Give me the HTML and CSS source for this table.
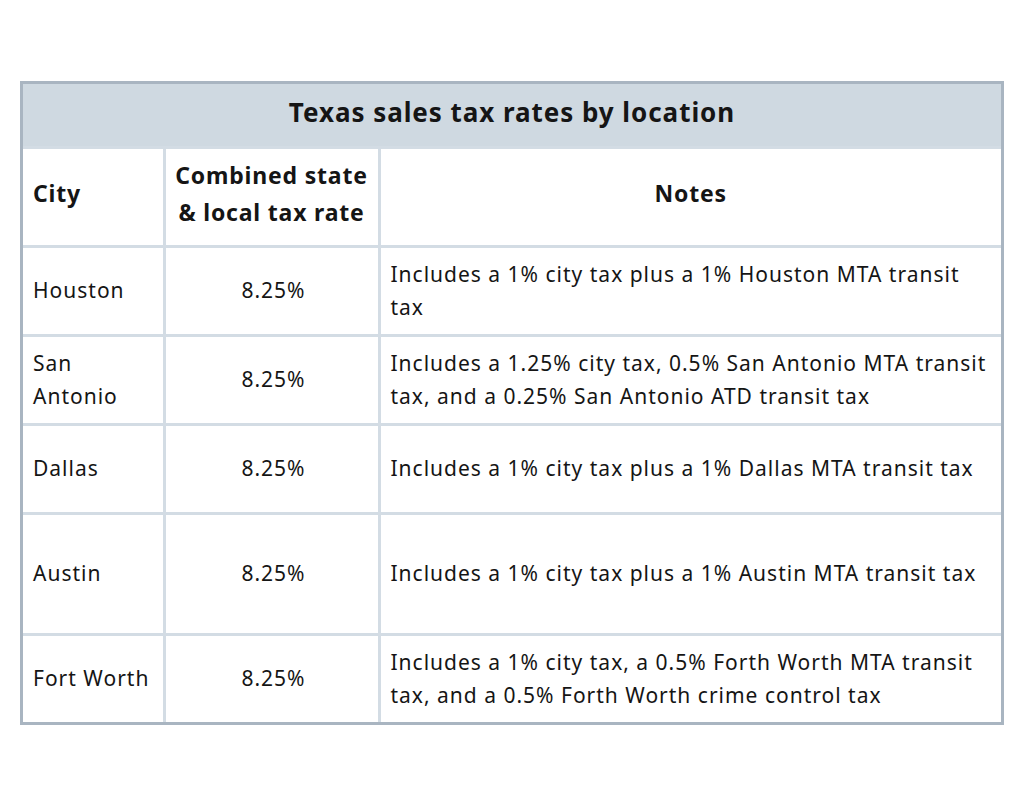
FILE: index.html
```html
<!DOCTYPE html>
<html lang="en">
<head>
<meta charset="utf-8">
<title>Texas sales tax rates by location</title>
<link rel="stylesheet" href="styles.css">
</head>
<body>
<div class="frame">
  <table class="rates">
    <colgroup>
      <col class="c-city">
      <col class="c-rate">
      <col class="c-notes">
    </colgroup>
    <thead>
      <tr class="r-title"><th colspan="3" class="title">Texas sales tax rates by location</th></tr>
      <tr class="r-head">
        <th class="left">City</th>
        <th>Combined state<br>&amp; local tax rate</th>
        <th>Notes</th>
      </tr>
    </thead>
    <tbody>
      <tr class="r-89">
        <td>Houston</td>
        <td class="center">8.25%</td>
        <td>Includes a 1% city tax plus a 1% Houston MTA transit tax</td>
      </tr>
      <tr class="r-89">
        <td>San<br>Antonio</td>
        <td class="center">8.25%</td>
        <td>Includes a 1.25% city tax, 0.5% San Antonio MTA transit tax, and a 0.25% San Antonio ATD transit tax</td>
      </tr>
      <tr class="r-89">
        <td>Dallas</td>
        <td class="center">8.25%</td>
        <td>Includes a 1% city tax plus a 1% Dallas MTA transit tax</td>
      </tr>
      <tr class="r-122">
        <td>Austin</td>
        <td class="center">8.25%</td>
        <td>Includes a 1% city tax plus a 1% Austin MTA transit tax</td>
      </tr>
      <tr class="r-88">
        <td>Fort Worth</td>
        <td class="center">8.25%</td>
        <td>Includes a 1% city tax, a 0.5% Forth Worth MTA transit tax, and a 0.5% Forth Worth crime control tax</td>
      </tr>
    </tbody>
  </table>
</div>
</body>
</html>
```
FILE: styles.css
```css
html, body {
  margin: 0;
  padding: 0;
  background: #ffffff;
}
body {
  padding: 81px 0 0 20px;
  font-family: "Noto Sans", "Open Sans", sans-serif;
  color: #151515;
}
.frame {
  width: 978px;
  border: 3px solid #a9b5c1;
}
.rates {
  width: 100%;
  table-layout: fixed;
  border-collapse: collapse;
  border-style: hidden;
  font-size: 21px;
  letter-spacing: 1px;
  line-height: 33px;
}
.c-city { width: 141px; }
.c-rate { width: 215px; }
.rates th, .rates td {
  border: 3px solid #d3dce4;
  padding: 0 10px 0 10px;
  vertical-align: middle;
  text-align: left;
  font-weight: 400;
}
.rates th {
  font-weight: 700;
  font-size: 23px;
  letter-spacing: 0.8px;
  text-align: center;
  line-height: 37px;
  padding: 0 6px 6px 6px;
  white-space: nowrap;
}
.rates th.left { text-align: left; padding-left: 10px; }
.rates td.center { text-align: center; padding-left: 12px; padding-right: 8px; }
.rates th.title {
  background: #cfd9e1;
  font-size: 26px;
  letter-spacing: 0.95px;
  padding-bottom: 4px;
}
.r-title { height: 63px; }
.r-head { height: 99px; }
.r-89 { height: 89px; }
.r-122 { height: 121px; }
.r-88 { height: 88px; }
```
